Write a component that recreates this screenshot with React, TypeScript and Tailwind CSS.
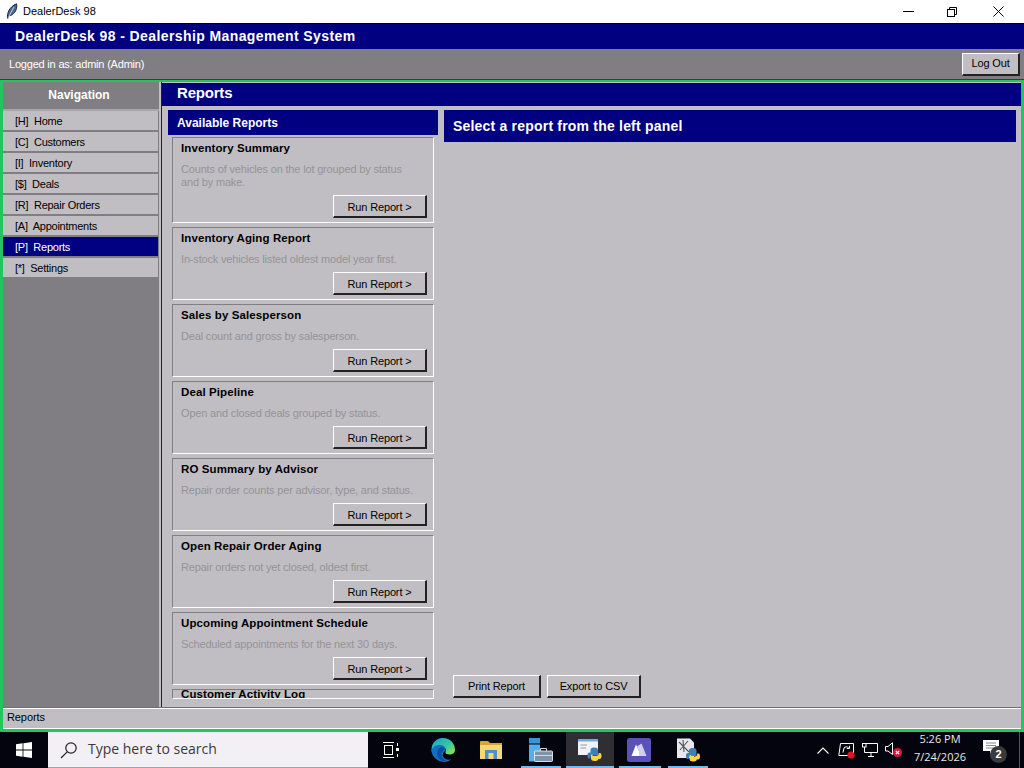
import React from "react";

const font = { fontFamily: '"Liberation Sans", Arial, sans-serif' };

const navItems = [
  ["[H]", "Home"],
  ["[C]", "Customers"],
  ["[I]", "Inventory"],
  ["[$]", "Deals"],
  ["[R]", "Repair Orders"],
  ["[A]", "Appointments"],
  ["[P]", "Reports"],
  ["[*]", "Settings"],
];

const reports: [string, string, string?][] = [
  ["Inventory Summary", "Counts of vehicles on the lot grouped by status", "and by make."],
  ["Inventory Aging Report", "In-stock vehicles listed oldest model year first."],
  ["Sales by Salesperson", "Deal count and gross by salesperson."],
  ["Deal Pipeline", "Open and closed deals grouped by status."],
  ["RO Summary by Advisor", "Repair order counts per advisor, type, and status."],
  ["Open Repair Order Aging", "Repair orders not yet closed, oldest first."],
  ["Upcoming Appointment Schedule", "Scheduled appointments for the next 30 days."],
];

function Btn({ label, w, h, extra }: { label: string; w: string; h: string; extra?: string }) {
  return (
    <div className={`${w} ${h} ${extra ?? ""} shrink-0 flex items-center justify-center border-t border-l border-t-white border-l-white border-r-2 border-b-2 border-r-[#222] border-b-[#222] bg-[#c0bec2] text-[11px] tracking-[-0.15px] text-black`}>
      {label}
    </div>
  );
}

function Card({ title, l1, l2 }: { title: string; l1: string; l2?: string }) {
  return (
    <div className={`${l2 ? "h-[86px]" : "h-[73px]"} shrink-0 flex flex-col border-t border-l border-t-[#808080] border-l-[#808080] border-r border-b border-r-white border-b-white pl-[8px] pr-[6px] pt-[3px]`}>
      <div className="h-[15px] text-[11.5px] leading-[15px] font-bold text-black tracking-[0.1px] whitespace-nowrap">{title}</div>
      <div className="mt-[7px] text-[11px] leading-[13px] text-[#959397] tracking-[-0.17px] whitespace-nowrap">
        {l1}
        {l2 && <br />}
        {l2}
      </div>
      <div className="flex-1" />
      <div className="flex justify-end pb-[4px]">
        <Btn label="Run Report >" w="w-[94px]" h="h-[23px]" extra="pt-[2px]" />
      </div>
    </div>
  );
}

function Feather() {
  return (
    <svg width="12" height="17" viewBox="0 0 12 17" className="ml-[6px]">
      <path d="M1.5 16 C1 10 3 4 10.5 .8 C11.5 5 9.5 9 7.5 10.5 C6.5 12 5 12.5 3.2 12.5 Z" fill="#4c6a94" stroke="#16203a" strokeWidth="1" />
      <path d="M1.5 16 L8 4" stroke="#dfe6f0" strokeWidth="0.8" />
    </svg>
  );
}

function TaskBtn({ w, ml, bar, active, children }: { w: string; ml?: string; bar?: string; active?: boolean; children: React.ReactNode }) {
  return (
    <div className={`${w} ${ml ?? ""} ${active ? "bg-[#2f2f33]" : ""} relative shrink-0 flex items-center justify-center`}>
      {children}
      {bar && <div className={`${bar} absolute bottom-0 h-[2px] bg-[#76b9ed]`} />}
    </div>
  );
}

function Python({ x, y }: { x: number; y: number }) {
  return (
    <g transform={`translate(${x} ${y})`}>
      <path d="M3 5 V2.5 C3 .5 5 0 7 0 C9 0 10.5 .8 10.5 2.5 V6.5 C10.5 7.5 9.5 8 8.5 8 H5.5 C3.5 8 2.8 9 2.8 11 H1.5 C.3 11 0 9.5 0 7.8 C0 6 .5 5 2 5 Z" fill="#3f7fb5" />
      <path d="M11 8.5 V11 C11 13 9 13.5 7 13.5 C5 13.5 3.5 12.7 3.5 11 V7 H5 V8.5 H8.5 C10.5 8.5 11.2 7.5 11.2 5.5 H12.5 C13.7 5.5 14 7 14 8.5 C14 10.3 13.5 11.4 12 11.4 H11 Z" fill="#ffd23f" />
    </g>
  );
}

function Taskbar() {
  return (
    <div className="h-[36px] shrink-0 flex items-stretch bg-[#04040e] text-white">
      <div className="w-[48px] shrink-0 flex items-center justify-center">
        <svg width="16" height="16" viewBox="0 0 16 16" fill="#fff">
          <path d="M0 2.3 L6.6 1.3 V7.5 H0 Z M7.4 1.2 L16 0 V7.5 H7.4 Z M0 8.4 H6.6 V14.7 L0 13.7 Z M7.4 8.4 H16 V16 L7.4 14.8 Z" />
        </svg>
      </div>
      <div className="w-[320px] shrink-0 flex items-center bg-[#f2f0f4] border-b border-[#a0a0a0]">
        <svg width="18" height="18" viewBox="0 0 18 18" fill="none" stroke="#222" strokeWidth="1.2" className="ml-[12px]">
          <circle cx="11" cy="7" r="5.2" />
          <path d="M7.2 10.8 L1 17" />
        </svg>
        <span className="ml-[10px] text-[14px] leading-[14px] pb-[2px] text-[#3a3a3a]" style={{ fontFamily: '"Open Sans", sans-serif' }}>Type here to search</span>
      </div>
      <TaskBtn w="w-[46px]">
        <svg width="16" height="16" viewBox="0 0 16 16" fill="none" stroke="#fff" strokeWidth="1">
          <path d="M0 .5 H11 M0 15.5 H11" />
          <rect x="1.5" y="3.5" width="8" height="9" />
          <path d="M14.5 1 V4 M14.5 12 V15" />
          <rect x="13" y="6" width="3" height="3" fill="#fff" stroke="none" />
        </svg>
      </TaskBtn>
      <TaskBtn w="w-[48px]" ml="ml-[5px]">
        <svg width="24" height="24" viewBox="0 0 24 24">
          <defs>
            <linearGradient id="eg" x1="0.2" y1="0" x2="1" y2="0.7">
              <stop offset="0" stopColor="#1fa6c9" />
              <stop offset="0.6" stopColor="#33c6a5" />
              <stop offset="1" stopColor="#7fdc5a" />
            </linearGradient>
          </defs>
          <path d="M.5 11.5 C.5 4.5 6 0 12 0 C19 0 24 5 24 12 C24 15 21.5 16.5 18.5 16.5 C15.5 16.5 14 15.5 14.5 14 C15.5 12.5 15 9 11 8.5 C6 8 1.5 12 .5 14 Z" fill="url(#eg)" />
          <path d="M.5 12 C2 8.5 6 6.5 10 7 C13.5 7.5 15 10.5 14.2 13 C12.5 14 11 16 12 18.5 C13.5 21.5 17.5 22.5 20.5 21 C17 24.5 11 25 6.5 22 C2.5 19.5 .5 16 .5 12 Z" fill="#1170c4" />
          <path d="M7.5 20 C5 16 6 11 10 9 C12 8.5 13.5 10 13.8 11.5 C11 13 9.5 16 11 19 C12 21 14 22.5 16 23 C13 23.8 9.5 22.8 7.5 20 Z" fill="#0d4f9e" />
        </svg>
      </TaskBtn>
      <TaskBtn w="w-[48px]">
        <svg width="22" height="18" viewBox="0 0 22 18">
          <path d="M0 1 Q0 0 1 0 H8 L10 2 H22 V17 H0 Z" fill="#d9a52e" />
          <rect x="0" y="4" width="22" height="14" fill="#f7d774" />
          <path d="M5 18 V9 H17 V18 H13.5 V12 H8.5 V18 Z" fill="#4e8fc9" />
        </svg>
      </TaskBtn>
      <TaskBtn w="w-[50px]" ml="ml-[1px]" bar="w-[40px] left-[5px]">
        <svg width="24" height="24" viewBox="0 0 24 24">
          <rect x="0" y="0" width="11" height="5.5" fill="#3a95d8" />
          <rect x="0" y="6.5" width="11" height="17" fill="#55aeea" />
          <rect x="5.5" y="13" width="18" height="10.5" rx="1" fill="#7f93a8" stroke="#e5edf5" strokeWidth="0.9" />
          <path d="M11.5 13 V10.5 H17.5 V13" fill="none" stroke="#e5edf5" strokeWidth="0.9" />
          <path d="M6 17.5 H23" stroke="#e5edf5" strokeWidth="0.8" />
        </svg>
      </TaskBtn>
      <TaskBtn w="w-[48px]" active bar="w-[48px] left-0">
        <svg width="24" height="24" viewBox="0 0 24 24">
          <rect x="0" y="1" width="20" height="16" fill="#f2f3f7" />
          <rect x="0" y="1" width="20" height="2.5" fill="#6aaee0" />
          <path d="M2.5 7 H9 M2.5 10 H8" stroke="#9a9a9a" strokeWidth="1" />
          <Python x={9.5} y={9.5} />
        </svg>
      </TaskBtn>
      <TaskBtn w="w-[48px]" ml="ml-[1px]" bar="w-[42px] left-[4px]">
        <svg width="24" height="24" viewBox="0 0 24 24">
          <rect x="0" y="0" width="24" height="24" rx="2.5" fill="#5b52b8" />
          <path d="M4.5 18 L9 6.5 L12 13 V18 Z" fill="#fff" />
          <path d="M12 18 V13 L10 8.5 L14.5 5.5 L19.5 18 Z" fill="#d2ceef" />
        </svg>
      </TaskBtn>
      <TaskBtn w="w-[48px]" ml="ml-[1px]" bar="w-[40px] left-[4px]">
        <svg width="24" height="24" viewBox="0 0 24 24">
          <path d="M1 .5 H14 L18 4.5 V20 H1 Z" fill="#e8e8ec" />
          <path d="M3 4 L13 14 M4 12 L12 3 M7 2 L8 14" stroke="#555" strokeWidth="1.1" />
          <Python x={10} y={10} />
        </svg>
      </TaskBtn>
      <div className="flex-1" />
      <div className="w-[24px] ml-[1px] mr-[-1px] shrink-0 flex items-center justify-center">
        <svg width="12" height="7" viewBox="0 0 12 7" fill="none" stroke="#fff" strokeWidth="1.1"><path d="M.5 6.5 L6 1 L11.5 6.5" /></svg>
      </div>
      <div className="w-[24px] shrink-0 flex items-center justify-center">
        <svg width="17" height="17" viewBox="0 0 17 17">
          <path d="M2.5 1.5 H15.5 V11 M13 13.5 H.8 L2.5 1.5" fill="none" stroke="#fff" />
          <path d="M5 10.5 L6 6 C7 4.5 9.5 4.5 10.8 6 M8.8 6.5 H11.5 V3.8" fill="none" stroke="#fff" />
          <circle cx="13" cy="13" r="3.6" fill="#e81123" />
        </svg>
      </div>
      <div className="w-[24px] shrink-0 flex items-center justify-center">
        <svg width="16" height="14" viewBox="0 0 16 14" fill="none" stroke="#fff">
          <path d="M4 .5 H15.5 V9.5 H2.5 V4" />
          <rect x="0.5" y="0.5" width="3.5" height="3.5" />
          <path d="M6 13.5 H12 M9 9.5 V13.5" />
        </svg>
      </div>
      <div className="w-[23px] shrink-0 flex items-center justify-center">
        <svg width="18" height="16" viewBox="0 0 18 16">
          <path d="M.5 4.5 H3 L7.5 .8 V12.5 L3 9 H.5 Z" fill="none" stroke="#fff" />
          <circle cx="12.5" cy="10.5" r="4.6" fill="#d0163b" />
          <path d="M10.8 8.8 L14.2 12.2 M14.2 8.8 L10.8 12.2" stroke="#fff" strokeWidth="1.2" />
        </svg>
      </div>
      <div className="w-[70px] shrink-0 flex flex-col items-center justify-center pb-[5px] text-[11px] leading-[18px] text-[#e8e8e8]" style={{ fontFamily: '"Open Sans", sans-serif' }}>
        <span>5:26 PM</span>
        <span>7/24/2026</span>
      </div>
      <div className="w-[44px] shrink-0 relative flex items-center justify-center">
        <svg width="16" height="14" viewBox="0 0 16 14" className="mr-[12px] mb-[7px]">
          <path d="M0 0 H16 V11 H10 L7 14 V11 H0 Z" fill="#fff" />
          <path d="M3 3 H13 M3 5.5 H13 M3 8 H13" stroke="#555" strokeWidth="0.7" />
        </svg>
        <span className="absolute left-[15px] top-[14px] w-[17px] h-[17px] rounded-full bg-[#3a3a3e] text-[11px] font-bold leading-[17px] text-center text-white">2</span>
      </div>
      <div className="w-[5px] shrink-0 border-l border-[#55555a]" />
    </div>
  );
}

export default function App() {
  return (
    <div className="w-[1024px] h-[768px] flex flex-col overflow-hidden bg-white" style={font}>
      <div className="h-[23px] shrink-0 flex items-center bg-white">
        <Feather />
        <span className="ml-[5px] text-[11px] text-black">DealerDesk 98</span>
        <div className="flex-1" />
        <svg width="11" height="1" viewBox="0 0 11 1" className="mr-[33px]"><path d="M0 .5 H11" stroke="#000" /></svg>
        <svg width="10" height="10" viewBox="0 0 10 10" fill="none" stroke="#000" className="mr-[36px]">
          <rect x=".5" y="2.5" width="7" height="7" />
          <path d="M2.5 2.5 V.5 H9.5 V7.5 H7.5" />
        </svg>
        <svg width="11" height="11" viewBox="0 0 11 11" stroke="#000" className="mr-[20px]"><path d="M.5 .5 L10.5 10.5 M10.5 .5 L.5 10.5" /></svg>
      </div>

      <div className="h-[26px] shrink-0 flex items-center bg-[#000080] pl-[15px] text-[14px] font-bold text-white tracking-[0.4px] border-t border-[#000]">
        DealerDesk 98 - Dealership Management System
      </div>

      <div className="h-[31px] shrink-0 flex items-center bg-[#807e82] pl-[9px] pr-[4px] text-[11px] tracking-[-0.2px] text-white border-b border-[#3c3c3c]">
        <span>Logged in as: admin (Admin)</span>
        <div className="flex-1" />
        <Btn label="Log Out" w="w-[58px]" h="h-[23px]" />
      </div>

      <div className="h-[652px] shrink-0 flex flex-col border-t-[2px] border-x-[3px] border-b-[3px] border-[#22c55e] bg-[#c0bec2]">
        <div className="flex-1 min-h-0 flex">
          <div className="w-[156px] shrink-0 flex flex-col bg-[#807e82]">
            <div className="h-[29px] pb-[2px] pr-[4px] shrink-0 flex items-center justify-center text-[12px] font-bold text-white border-b-2 border-[#a8a6aa]">
              Navigation
            </div>
            <div className="flex flex-col">
              {navItems.map(([k, n]) => {
                const active = n === "Reports";
                return (
                  <div key={n} className={`h-[21px] pt-[1px] mr-[1px] flex items-center pl-[12px] text-[11px] tracking-[-0.25px] border-b-2 border-[#807e82] whitespace-pre ${active ? "bg-[#000080] text-white" : "bg-[#c0bec2] text-black"}`}>
                    {k}  {n}
                  </div>
                );
              })}
            </div>
          </div>
          <div className="w-[3px] shrink-0 bg-[#c0bec2] border-r border-[#222]" />
          <div className="flex-1 min-w-0 flex flex-col">
            <div className="h-[23px] mt-[1px] pb-[2px] shrink-0 flex items-center bg-[#000080] pl-[15px] text-[15px] font-bold tracking-[-0.2px] text-white">
              Reports
            </div>
            <div className="flex-1 min-h-0 flex pt-[4px] pl-[6px] pr-[5px] pb-[8px] gap-[6px]">
              <div className="w-[270px] shrink-0 flex flex-col">
                <div className="h-[25px] shrink-0 flex items-center bg-[#000080] pl-[9px] text-[12px] font-bold text-white">
                  Available Reports
                </div>
                <div className="flex-1 min-h-0 overflow-hidden flex flex-col gap-[4px] pt-[2px] pl-[4px] pr-[4px]">
                  {reports.map(([t, a, b]) => (
                    <Card key={t} title={t} l1={a} l2={b} />
                  ))}
                  <div className="h-[10px] shrink-0 overflow-hidden border-t border-l border-t-[#808080] border-l-[#808080] border-r border-b border-r-white border-b-white pl-[8px]">
                    <div className="-mt-[1px] text-[11.5px] leading-[11px] font-bold text-black tracking-[0.1px] whitespace-nowrap">Customer Activity Log</div>
                  </div>
                </div>
              </div>
              <div className="flex-1 min-w-0 flex flex-col">
                <div className="h-[32px] shrink-0 flex items-center bg-[#000080] pl-[9px] text-[14px] font-bold tracking-[0.2px] text-white">
                  Select a report from the left panel
                </div>
                <div className="flex-1" />
                <div className="flex gap-[6px] pl-[9px] pb-[1px]">
                  <Btn label="Print Report" w="w-[88px]" h="h-[23px]" />
                  <Btn label="Export to CSV" w="w-[94px]" h="h-[23px]" />
                </div>
              </div>
            </div>
          </div>
        </div>
        <div className="h-[22px] shrink-0 flex items-center pl-[4px] pb-[1px] text-[11px] tracking-[-0.1px] text-black border-t border-t-[#707070] border-b border-b-white shadow-[inset_0_1px_0_#fff]">
          Reports
        </div>
      </div>

      <Taskbar />
    </div>
  );
}
